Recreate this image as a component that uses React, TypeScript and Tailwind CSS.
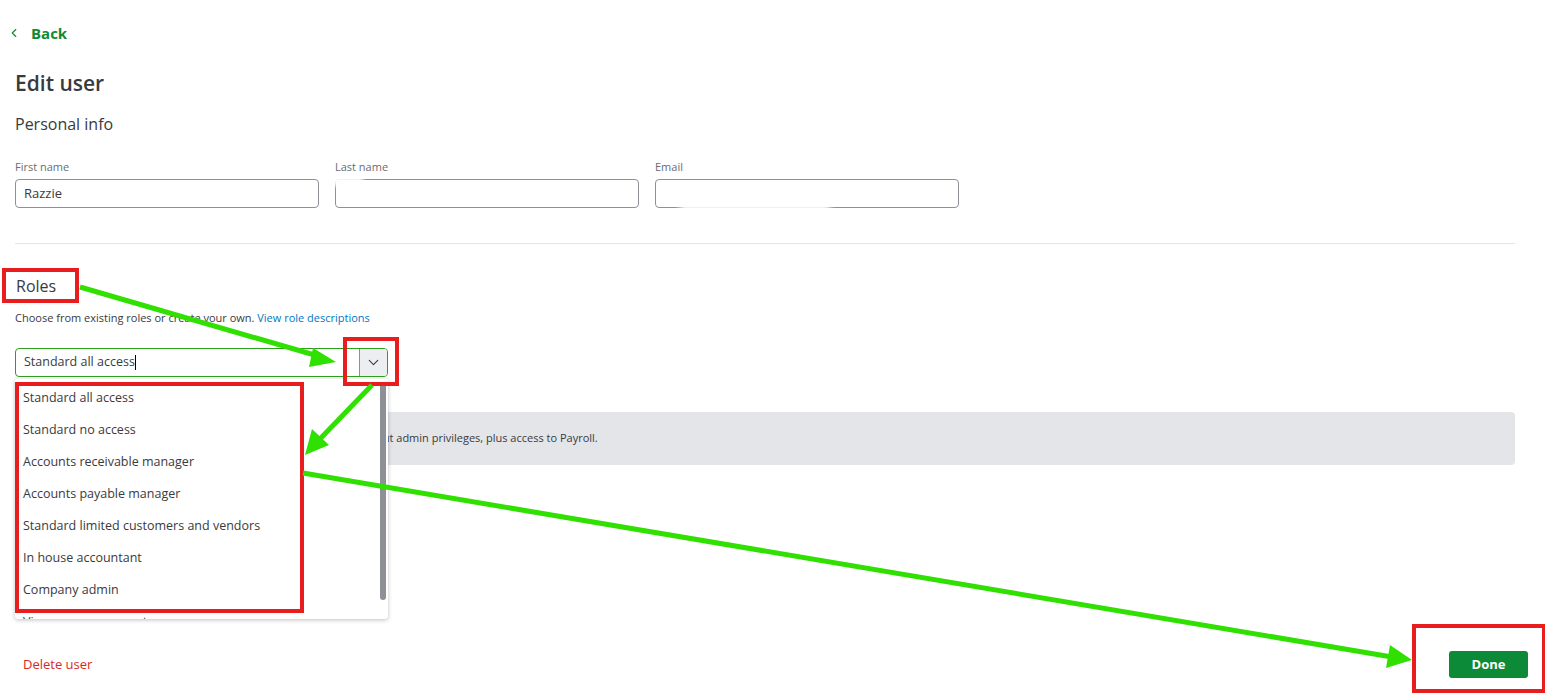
import { ChevronDown, ChevronLeft } from 'lucide-react';

const roles = [
  'Standard all access',
  'Standard no access',
  'Accounts receivable manager',
  'Accounts payable manager',
  'Standard limited customers and vendors',
  'In house accountant',
  'Company admin',
  'View company reports',
];

function Field({ label, value }: { label: string; value?: string }) {
  return (
    <div className="flex flex-col w-[304px]">
      <label className="text-[11px] leading-[14px] text-[#6b6c72] mb-[5px]">{label}</label>
      <div className="h-[29px] rounded-[4px] border border-[#8d9096] px-[8px] flex items-center text-[13px] text-[#393a3d]">
        {value}
      </div>
    </div>
  );
}

// screenshot markup: red boxes + green arrows drawn on top of the page
function Annotations() {
  const red = '#e81e1e';
  const green = '#2fe000';
  return (
    <svg className="absolute inset-0 z-20 pointer-events-none" width="1545" height="697" viewBox="0 0 1545 697">
      <rect x="4" y="270" width="73" height="31" fill="none" stroke={red} strokeWidth="4" />
      <rect x="345" y="339" width="52" height="45" fill="none" stroke={red} strokeWidth="4" />
      <rect x="17" y="384" width="285" height="227" fill="none" stroke={red} strokeWidth="4" />
      <rect x="1414" y="626" width="130" height="65" fill="none" stroke={red} strokeWidth="4" />

      <line x1="80" y1="287" x2="318" y2="356" stroke={green} strokeWidth="5" />
      <polygon points="336,362 313,348 309,367" fill={green} />

      <line x1="372" y1="385" x2="318" y2="441" stroke={green} strokeWidth="5" />
      <polygon points="305,455 312,429 329,445" fill={green} />

      <line x1="303" y1="473" x2="1392" y2="657" stroke={green} strokeWidth="5" />
      <polygon points="1412,660 1390,645 1386,668" fill={green} />
    </svg>
  );
}

export default function App() {
  return (
    <div className="relative w-[1545px] h-[697px] overflow-hidden bg-white text-[#393a3d]" style={{ fontFamily: '"Open Sans", "Liberation Sans", sans-serif' }}>
      <div className="px-[15px] pt-[23px] flex flex-col">
        {/* Back link */}
        <div className="flex items-center gap-[10px] text-[#108a36] -ml-[8px]">
          <ChevronLeft size={14} strokeWidth={2} />
          <span className="text-[15px] leading-[20px] font-bold">Back</span>
        </div>

        <h1 className="mt-[26px] text-[21px] leading-[28px] font-semibold">Edit user</h1>
        <h2 className="mt-[16px] text-[16px] leading-[22px]">Personal info</h2>

        <div className="mt-[25px] flex gap-[16px]">
          <Field label="First name" value="Razzie" />
          <Field label="Last name" />
          <Field label="Email" />
        </div>

        <div className="mt-[35px] h-px w-[1500px] bg-[#e3e5e8]" />

        {/* Roles */}
        <h2 className="mt-[31px] text-[16px] leading-[22px] pl-[1px]">Roles</h2>
        <p className="mt-[14px] text-[11px] leading-[14px] text-[#393a3d]">
          Choose from existing roles or create your own. <span className="text-[#0077c5]">View role descriptions</span>
        </p>

        <div className="relative mt-[23px] w-[373px]">
          <div className="h-[29px] rounded-[4px] border border-[#2ca01c] flex overflow-hidden">
            <div className="flex-1 flex items-center px-[8px] text-[12.5px]">
              Standard all access<span className="w-px h-[15px] bg-black" />
            </div>
            <div className="w-[28px] border-l border-[#8d9096] bg-[#eceef1] flex items-center justify-center text-[#393a3d]">
              <ChevronDown size={17} strokeWidth={1.5} />
            </div>
          </div>

          {/* open menu */}
          <div className="absolute z-10 left-0 top-[31px] w-[373px] h-[240px] bg-white rounded-b-[3px] shadow-[0_1px_4px_rgba(0,0,0,0.25)] overflow-hidden">
            <div className="flex flex-col pt-[3px]">
              {roles.map((r) => (
                <div key={r} className="h-[32px] shrink-0 flex items-center px-[8px] text-[12.5px] text-[#393a3d]">
                  {r}
                </div>
              ))}
            </div>
            <div className="absolute right-[2px] top-[3px] w-[6px] h-[218px] rounded-[3px] bg-[#8d9096]" />
          </div>
        </div>

        <div className="mt-[35px] h-[53px] w-[1500px] rounded-[4px] bg-[#e3e5e8] flex items-center px-[16px] text-[11px] text-[#393a3d]">
          Standard access lets you see and do everything in QuickBooks, without admin privileges, plus access to Payroll.
        </div>

        <div className="mt-[186px] flex items-center justify-between pl-[8px] pr-[2px]">
          <span className="text-[13px] text-[#d52b1e]">Delete user</span>
          <button className="w-[79px] h-[27px] rounded-[3px] bg-[#0d8a37] text-white text-[13px] font-bold">Done</button>
        </div>
      </div>

      {/* redaction smudges */}
      <div className="absolute left-[680px] top-[204px] w-[150px] h-[12px] bg-white blur-[3px]" />
      <div className="absolute left-[333px] top-[177px] w-[30px] h-[9px] bg-white blur-[2px]" />

      <Annotations />
    </div>
  );
}
